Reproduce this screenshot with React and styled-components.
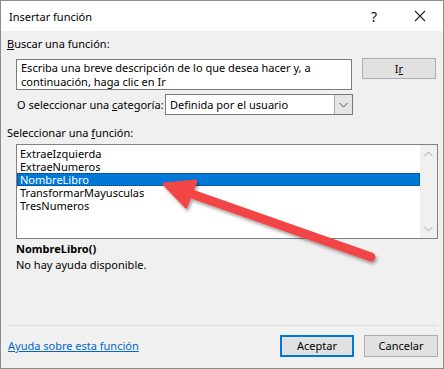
import React from 'react'
import styled, { createGlobalStyle } from 'styled-components'

const Global = createGlobalStyle`
  html, body { margin: 0; padding: 0; background: #ffffff; }
  * { box-sizing: border-box; }
`

const Window = styled.div`
  position: relative;
  width: 444px;
  height: 369px;
  border: 1px solid #8c8c8c;
  background: #f0f0f0;
  display: flex;
  flex-direction: column;
  font-family: "Noto Sans", "Open Sans", sans-serif;
  font-size: 11px;
  color: #000;
`

const TitleBar = styled.div`
  height: 30px;
  background: #ffffff;
  display: flex;
  align-items: center;
  padding-left: 8px;
`

const Title = styled.div`
  flex: 1;
  font-size: 11px;
`

const TitleIcon = styled.div`
  width: 46px;
  height: 30px;
  display: flex;
  align-items: center;
  justify-content: center;
  font-size: 14px;
  color: #111;
`

const Body = styled.div`
  flex: 1;
  display: flex;
  flex-direction: column;
  padding: 5px 5px 0 6px;
`

const Label = styled.div`
  line-height: 16px;
  height: 16px;
  margin-top: ${p => p.$top || 0}px;
  padding-left: ${p => p.$indent || 0}px;
  font-weight: ${p => (p.$bold ? 700 : 400)};
  white-space: nowrap;
`

const SearchRow = styled.div`
  display: flex;
  align-items: flex-start;
  margin-top: 7px;
  padding-left: 9px;
  gap: 10px;
`

const TextArea = styled.div`
  width: 336px;
  height: 31px;
  border: 1px solid #7a7a7a;
  background: #fff;
  padding: 1px 4px;
  line-height: 14px;
`

const Button = styled.div`
  width: 74px;
  height: ${p => p.$h || 22}px;
  margin-top: ${p => p.$top || 0}px;
  background: #e1e1e1;
  border: ${p => (p.$default ? '2px solid #0078d7' : '1px solid #adadad')};
  display: flex;
  align-items: center;
  justify-content: center;
`

const CategoryRow = styled.div`
  display: flex;
  align-items: center;
  margin-top: 4px;
  padding-left: 10px;
  height: 21px;
`

const CategoryLabel = styled.div`
  width: 148px;
  white-space: nowrap;
`

const Select = styled.div`
  width: 188px;
  height: 21px;
  border: 1px solid #7a7a7a;
  background: #fff;
  display: flex;
  align-items: center;
`

const SelectText = styled.div`
  flex: 1;
  padding-left: 4px;
`

const SelectButton = styled.div`
  width: 18px;
  height: 19px;
  background: #e5e5e5;
  border-left: 1px solid #adadad;
  display: flex;
  align-items: center;
  justify-content: center;
`

const ListBox = styled.div`
  margin: 3px 0 0 9px;
  width: 422px;
  height: 95px;
  border: 1px solid #828282;
  background: #fff;
  display: flex;
`

const Items = styled.div`
  flex: 1;
  padding-top: 2px;
`

const Item = styled.div`
  height: 13px;
  line-height: 13px;
  padding-left: 3px;
  background: ${p => (p.$selected ? '#0078d7' : 'transparent')};
  color: ${p => (p.$selected ? '#fff' : '#000')};
  outline: ${p => (p.$selected ? '1px dotted #0a3a6a' : 'none')};
  outline-offset: -1px;
`

const ScrollBar = styled.div`
  width: 17px;
  background: #f0f0f0;
  display: flex;
  flex-direction: column;
  justify-content: space-between;
  align-items: center;
  padding: 6px 0;
`

const Spacer = styled.div`
  flex: 1;
`

const Separator = styled.div`
  height: 1px;
  margin-left: 2px;
  background: #dcdcdc;
`

const Footer = styled.div`
  display: flex;
  align-items: center;
  height: 42px;
  padding-bottom: 3px;
  gap: 10px;
`

const Link = styled.a`
  flex: 1;
  color: #0066cc;
  text-decoration: underline;
  padding-left: 1px;
`

const Chevron = ({ up, color = '#a6a6a6' }) => (
  <svg width="9" height="6" viewBox="0 0 9 6">
    <polyline
      points={up ? '0.5,5 4.5,1 8.5,5' : '0.5,1 4.5,5 8.5,1'}
      fill="none"
      stroke={color}
      strokeWidth="1"
    />
  </svg>
)

const Arrow = styled.svg`
  position: absolute;
  left: 0;
  top: 0;
  pointer-events: none;
`

const items = ['ExtraeIzquierda', 'ExtraeNumeros', 'NombreLibro', 'TransformarMayusculas', 'TresNumeros']

export default function App() {
  return (
    <>
      <Global />
      <Window>
        <TitleBar>
          <Title>Insertar función</Title>
          <TitleIcon>?</TitleIcon>
          <TitleIcon>
            <svg width="12" height="12" viewBox="0 0 12 12">
              <path d="M1 1L11 11M11 1L1 11" stroke="#222" strokeWidth="1.1" />
            </svg>
          </TitleIcon>
        </TitleBar>
        <Body>
          <Label>
            <u>B</u>uscar una función:
          </Label>
          <SearchRow>
            <TextArea>
              Escriba una breve descripción de lo que desea hacer y, a continuación, haga clic en Ir
            </TextArea>
            <Button $h={21} $top={-1}>
              I<u>r</u>
            </Button>
          </SearchRow>
          <CategoryRow>
            <CategoryLabel>
              O seleccionar una <u>c</u>ategoría:
            </CategoryLabel>
            <Select>
              <SelectText>Definida por el usuario</SelectText>
              <SelectButton>
                <Chevron color="#555" />
              </SelectButton>
            </Select>
          </CategoryRow>
          <Label $top={10}>
            Seleccionar una <u>f</u>unción:
          </Label>
          <ListBox>
            <Items>
              {items.map(name => (
                <Item key={name} $selected={name === 'NombreLibro'}>
                  {name}
                </Item>
              ))}
            </Items>
            <ScrollBar>
              <Chevron up />
              <Chevron />
            </ScrollBar>
          </ListBox>
          <Label $top={2} $indent={9} $bold>
            NombreLibro()
          </Label>
          <Label $indent={9}>No hay ayuda disponible.</Label>
          <Spacer />
          <Separator />
          <Footer>
            <Link>Ayuda sobre esta función</Link>
            <Button $default>Aceptar</Button>
            <Button>Cancelar</Button>
          </Footer>
        </Body>
        <Arrow width="444" height="369" viewBox="0 0 444 369">
          <defs>
            <filter id="sh" x="-20%" y="-20%" width="140%" height="140%">
              <feDropShadow dx="1.5" dy="2.5" stdDeviation="1.8" floodColor="#000" floodOpacity="0.35" />
            </filter>
          </defs>
          <g filter="url(#sh)" fill="#f24545" stroke="#f24545" strokeLinejoin="round">
            <line x1="370" y1="256" x2="188" y2="192" strokeWidth="9" strokeLinecap="round" />
            <polygon points="163,183 195,180 185,206" strokeWidth="3" />
          </g>
        </Arrow>
      </Window>
    </>
  )
}
